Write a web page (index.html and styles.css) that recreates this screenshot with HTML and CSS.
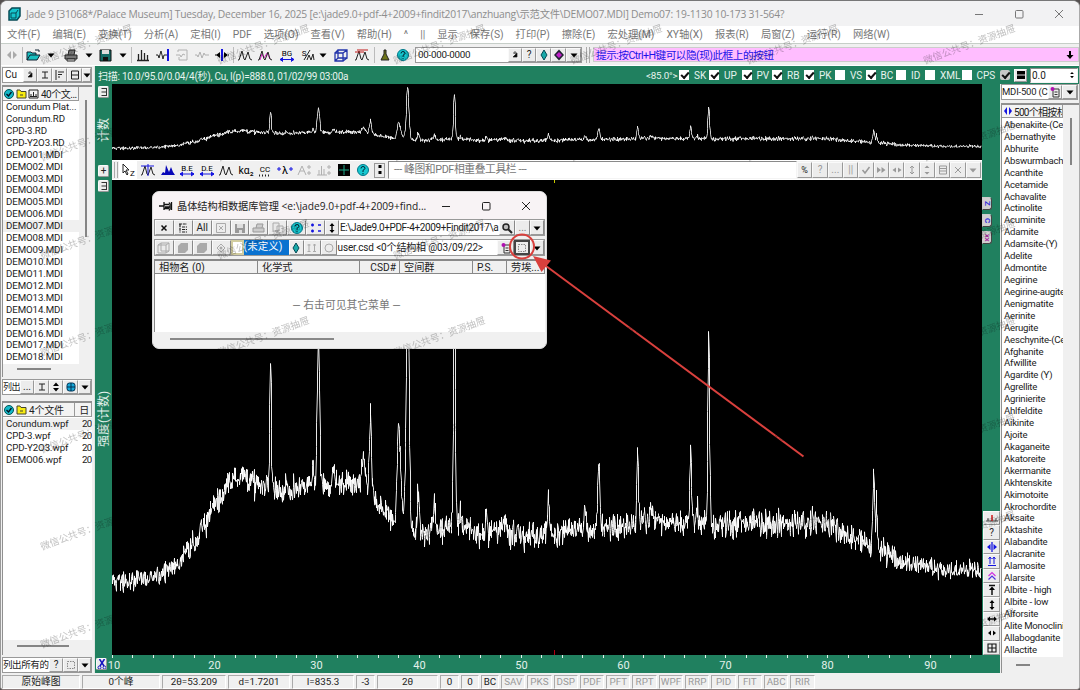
FILE: index.html
```html
<!DOCTYPE html>
<html lang="zh">

<head>
    <meta charset="utf-8">
    <title>Jade 9</title>
    <link rel="stylesheet" href="styles.css">
</head>

<body>
    <div class="app">
        <header class="titlebar">
            <i data-i="logo"></i>
            <span class="title">Jade 9 [31068*/Palace Museum] Tuesday, December 16, 2025 [e:\jade9.0+pdf-4+2009+findit2017\anzhuang\示范文件\DEMO07.MDI] Demo07: 19-1130 10-173 31-564?</span>
            <div class="winbtns"><i data-i="min"></i><i data-i="max"></i><i data-i="close"></i></div>
        </header>

        <nav class="menu" id="menu"></nav>

        <div class="toolbar">
            <i data-i="lrgray"></i><b class="sep"></b>
            <i data-i="open"></i><i data-i="down"></i>
            <i data-i="print"></i><i data-i="down"></i>
            <i data-i="save"></i><i data-i="down"></i><b class="sep"></b>
            <i data-i="bars"></i><i data-i="waveblue"></i><i data-i="boxgray"></i><i data-i="wavegray"></i><i data-i="splitblue"></i><b class="sep"></b>
            <i data-i="peaks"></i><i data-i="peakspink"></i><i data-i="bg"></i><i data-i="sm"></i><i data-i="down"></i>
            <i data-i="cube"></i><i data-i="peaksred"></i><b class="sep"></b>
            <i data-i="bell"></i><i data-i="help"></i>
            <div class="combo">
                <span class="field">00-000-0000</span>
                <button><i data-i="spin"></i></button><button>?</button><button><i data-i="drop"></i></button><button><i data-i="gem"></i></button><button><i data-i="down"></i></button>
            </div>
            <b class="grip"></b>
            <div class="hint"><span>提示:按Ctrl+H键可以隐(现)此框上的按钮</span><i data-i="arrowdown"></i></div>
        </div>

        <main>
            <aside class="left">
                <div class="strip five">
                    <span class="field">Cu</span><button><i data-i="spin"></i></button><button><i data-i="ibeam"></i></button><button><i data-i="flag"></i></button><button><i data-i="ri"></i></button><button><i data-i="down"></i></button>
                </div>
                <div class="listbox files">
                    <div class="listhead"><i data-i="check"></i><i data-i="folder"></i><i data-i="chart"></i><span>40个文...</span></div>
                    <ul id="files"></ul>
                    <b class="thumb v"></b>
                    <b class="thumb h"></b>
                </div>
                <div class="strip four">
                    <span class="field">列出</span><button>...</button><button><i data-i="ibeam"></i></button><button><i data-i="updown"></i></button><button><i data-i="globe"></i></button><button><i data-i="down"></i></button>
                </div>
                <div class="listbox wpf">
                    <div class="listhead"><i data-i="check"></i><i data-i="folder"></i><span>4个文件</span><em>日</em></div>
                    <ul id="wpf"></ul>
                    <b class="thumb h"></b>
                </div>
                <div class="strip three">
                    <span class="field">列出所有的</span><button>?</button><button><i data-i="dotbox"></i></button><button><i data-i="down"></i></button>
                </div>
            </aside>

            <section class="work">
                <div class="scanbar">
                    <span class="scan">扫描: 10.0/95.0/0.04/4(秒), Cu, I(p)=888.0, 01/02/99 03:00a</span>
                    <span class="lim">&lt;85.0°&gt;</span>
                    <div class="checks" id="checks"></div>
                    <b class="cb gray on"></b>
                    <button class="eq"><i data-i="eq"></i></button>
                    <span class="field zero">0.0<i data-i="spinner"></i></span>
                </div>

                <div class="cols">
                    <div class="chart">
                        <div class="rail">
                            <button class="tiny t1"><i data-i="ladder"></i></button>
                            <span class="axis a1">计数</span>
                            <button class="tiny t2">+</button>
                            <button class="tiny t3"><i data-i="ladder"></i></button>
                            <span class="axis a2">强度(计数)</span>
                            <button class="tiny t4"><i data-i="scissors"></i></button>
                        </div>
                        <div class="plots">
                            <svg class="over" viewBox="0 0 870 76"><path id="scan1" /></svg>
                            <div class="tools">
                                <b class="grip"></b>
                                <i class="act" data-i="cursor"></i><i data-i="peaksline"></i><i data-i="hills"></i><i data-i="be"></i><i data-i="de"></i><i data-i="peaks"></i><i data-i="ka"></i><i data-i="cc"></i><i data-i="lambda"></i><i data-i="agray"></i><i data-i="bargray"></i><i data-i="cross"></i><i data-i="help"></i>
                                <button><i data-i="dots2"></i></button>
                                <span class="field note">--- 峰图和PDF相重叠工具栏 ---</span>
                                <div class="mini">
                                    <button class="k">%</button><button>?</button><button>...</button><button>||</button><button><i data-i="tick"></i></button><button><i data-i="ff"></i></button><button><i data-i="lr"></i></button><button><i data-i="ud"></i></button><button><i data-i="ud2"></i></button><button><i data-i="sheet"></i></button><button><i data-i="xs"></i></button><button><i data-i="downgray"></i></button>
                                </div>
                            </div>
                            <svg class="mainplot" viewBox="0 0 870 475"><path id="scan2" /><path class="mark" d="M442.5 0v3" /><path class="mark red" d="M442.5 470v5" /></svg>
                            <svg class="scale" id="scale" viewBox="0 0 870 18"></svg>
                        </div>
                        <div class="rail right">
                            <div class="tabs"><button>Z</button><button>C</button><button class="p">XX</button></div>
                            <div class="zooms">
                                <button><i data-i="redbase"></i></button><button>?</button><button><i data-i="splitb"></i></button><button><i data-i="upup"></i></button><button><i data-i="chev"></i></button><button><i data-i="top"></i></button><button><i data-i="vert"></i></button><button><i data-i="horz"></i></button><button><i data-i="lrk"></i></button><button><i data-i="grid"></i></button>
                            </div>
                        </div>
                    </div>

                    <aside class="phases">
                        <div class="strip pick"><span class="field">MDI-500 (C</span><button><i data-i="note"></i></button><button><i data-i="down"></i></button></div>
                        <div class="listbox minerals">
                            <div class="listhead"><i data-i="lrblue"></i><span>500个相按材</span></div>
                            <ul id="minerals"></ul>
                            <b class="thumb v"></b>
                            <b class="thumb h"></b>
                        </div>
                    </aside>
                </div>
            </section>
        </main>

        <footer class="status" id="status"></footer>
    </div>

    <div class="dialog">
        <div class="dlgtitle">
            <i data-i="pin"></i>
            <span>晶体结构相数据库管理 &lt;e:\jade9.0+pdf-4+2009+find...</span>
            <div class="winbtns"><i data-i="min"></i><i data-i="max"></i><i data-i="close"></i></div>
        </div>
        <div class="dlgrow one">
            <button><i data-i="x"></i></button><button><i data-i="list"></i></button><button>All</button><button><i data-i="boxx"></i></button><button><i data-i="savegray"></i></button><button><i data-i="printgray"></i></button><button><i data-i="copy"></i></button><button><i data-i="help"></i></button><button><i data-i="dots"></i></button><button><i data-i="vert"></i></button>
            <span class="field path">E:\Jade9.0+PDF-4+2009+Findit2017\a</span>
            <button><i data-i="search"></i></button><button class="dim">...</button><button><i data-i="down"></i></button>
        </div>
        <div class="dlgrow two">
            <button><i data-i="cubegray"></i></button><button><i data-i="blob"></i></button><button><i data-i="blob"></i></button><button><i data-i="gemgray"></i></button>
            <b class="swatch"></b><span class="sel">(未定义)</span>
            <button><i data-i="drop"></i></button><button><i data-i="upgray"></i></button><button><i data-i="ring"></i></button>
            <span class="field">user.csd &lt;0个结构相 @03/09/22&gt;</span>
            <button><i data-i="note"></i></button><button class="boxed"><i data-i="dotbox"></i></button><button><i data-i="down"></i></button>
        </div>
        <div class="dlghead"><span>相物名 (0)</span><span>化学式</span><span class="num">CSD#</span><span>空间群</span><span>P.S.</span><span>劳埃...</span></div>
        <div class="dlgbody">— 右击可见其它菜单 —</div>
        <div class="dlgscroll"><b></b></div>
    </div>

    <svg class="callout" viewBox="0 0 1080 690">
        <circle cx="522" cy="246.500" r="12" />
        <path d="M803.500 456.500L544 264.500" />
        <polygon points="533,256 551,260.500 541.500,272" />
    </svg>

    <div class="stamps" id="stamps"></div>

    <script src="app.js"></script>
</body>

</html>
```
FILE: styles.css
```css
* {
    box-sizing: border-box;
}

body {
    margin: 0;
    width: 1080px;
    height: 690px;
    overflow: hidden;
    background: #55504f;
    font-family: Roboto, "Noto Sans CJK SC", sans-serif;
    font-size: 10px;
    color: #222;
}

button {
    margin: 0;
    padding: 0;
    border: 1px solid;
    border-color: #fafafa #999 #999 #fafafa;
    background: #ececec;
    font: inherit;
    color: #222;
    display: flex;
    align-items: center;
    justify-content: center;
    overflow: hidden;
    min-width: 0;
    line-height: 1;
}

ul {
    list-style: none;
    margin: 0;
    padding: 0;
}

i {
    display: flex;
    align-items: center;
    justify-content: center;
}

i svg {
    width: 16px;
    height: 14px;
    flex: none;
}

svg .g {
    font-weight: normal;
    font-style: normal;
    font-size: 8px;
}

svg .k {
    font-size: 11px;
}

.app {
    width: 1080px;
    height: 690px;
    display: flex;
    flex-direction: column;
    background: #f0f0f0;
    border-top: 1px solid #777;
    border-left: 1px solid #999;
    border-right: 1px solid #aaa;
    border-bottom: 1px solid #8a7c7c;
    border-radius: 7px 7px 4px 4px;
    overflow: hidden;
}

.field {
    background: #fff;
    border: 1px solid;
    border-color: #8a8a8a #f4f4f4 #f4f4f4 #8a8a8a;
    overflow: hidden;
    white-space: nowrap;
}

/* title and menu */
.titlebar {
    height: 25px;
    flex: none;
    background: #f2f2f3;
    display: flex;
    align-items: center;
    padding-left: 5px;
    color: #8d8d8d;
}

.title {
    font-family: "Open Sans", "Noto Sans CJK SC", sans-serif;
    font-size: 10.300px;
    letter-spacing: -0.235px;
    margin-left: 4px;
    flex: 1;
    white-space: nowrap;
}

.winbtns {
    display: grid;
    grid-template-columns: repeat(3, 40px);
    color: #777;
}

.menu {
    height: 18px;
    flex: none;
    background: #fff;
    display: flex;
    gap: 12px;
    padding-left: 6px;
    align-items: center;
    font-size: 10.300px;
    color: #777;
    white-space: nowrap;
    border-bottom: 1px solid #c6cec8;
}

.menu span {
    line-height: 16px;
}

/* main toolbar */
.toolbar {
    height: 22px;
    flex: none;
    display: grid;
    grid-template-columns: 21px 1px 20px 15px 25px 11px 22px 13px 4px 20px 20px 19px 20px 20px 3px 20px 19px 25px 17px 14px 21px 21px 4px 17px 20px 170px 10px 1fr;
    align-items: center;
    border-bottom: 1px solid #fff;
}

.sep {
    width: 1px;
    height: 16px;
    background: #bbb;
    justify-self: center;
}

.grip {
    width: 4px;
    height: 16px;
    border-left: 1px solid #aaa;
    border-right: 1px solid #aaa;
    justify-self: center;
}

.combo {
    display: grid;
    grid-template-columns: 1fr 14px 14px 15px 15px 15px;
    height: 16px;
    margin: 0 1px 0 2px;
    border: 1px solid #999;
}

.combo .field {
    border: 0;
    padding-left: 2px;
    line-height: 14px;
    font-size: 9.800px;
    letter-spacing: -0.25px;
}

.hint {
    height: 15px;
    background: #ffbdff;
    color: #1b12e8;
    display: flex;
    align-items: center;
    justify-content: space-between;
    padding-left: 2px;
    font-size: 10.700px;
    letter-spacing: -0.55px;
    border: 1px solid #ccc;
}

/* layout */
main {
    display: flex;
    height: 607px;
    flex: none;
}

.left {
    width: 94px;
    flex: none;
    display: flex;
    flex-direction: column;
    padding: 1px 2px 0 1px;
    border-right: 1px solid #dfe5e2;
}

.strip {
    display: grid;
    height: 16px;
    flex: none;
    border: 1px solid #999;
}

.strip .field {
    border: 0;
    padding-left: 2px;
    line-height: 14px;
}

.strip.five {
    grid-template-columns: 20px 14px 15px 15px 15px 1fr;
}

.strip.four {
    grid-template-columns: 17px 14px 15px 14px 15px 1fr;
}

.strip.four .field {
    padding-left: 0;
    font-size: 9px;
    letter-spacing: -0.5px;
}

.strip.three {
    grid-template-columns: 46px 14px 15px 1fr;
    margin-top: 2px;
}

.strip.three .field {
    padding-left: 0;
    font-size: 9.500px;
    letter-spacing: -0.4px;
}

.listbox {
    position: relative;
    background: #f0f0f0;
    border-top: 2px solid #909090;
    border-left: 1px solid #909090;
    overflow: hidden;
    flex: none;
}

.listbox ul {
    background: #fff;
    line-height: 11.930px;
    font-size: 9.700px;
    letter-spacing: -0.1px;
    overflow: hidden;
    white-space: nowrap;
}

.listbox li {
    padding-left: 3px;
    height: 11.930px;
}

.listbox li.sel {
    background: #f0f0f0;
}

.listhead {
    display: flex;
    align-items: center;
    height: 13px;
    border: 1px solid #999;
    border-width: 0 1px 1px 0;
    background: #f3f3f3;
    font-size: 10px;
    letter-spacing: -0.2px;
    white-space: nowrap;
    overflow: hidden;
}

.listhead i {
    width: 12px;
    flex: none;
}

.listhead span {
    margin-left: 2px;
}

.files {
    height: 292px;
    margin: 2px 0;
}

.files .listhead {
    width: 76px;
    height: 14px;
}

.files .listhead span {
    letter-spacing: -0.5px;
}

.files ul {
    width: 76px;
    height: 263px;
}

.wpf {
    height: 254px;
    margin-top: 6px;
}

.wpf .listhead {
    height: 14px;
}

.wpf .listhead em {
    margin-left: auto;
    border-left: 1px solid #999;
    padding: 0 2px 0 4px;
    font-style: normal;
}

.wpf ul {
    height: 223px;
    padding-top: 1px;
}

.wpf li {
    display: flex;
    justify-content: space-between;
}

.wpf li span + span {
    width: 10px;
    letter-spacing: -0.6px;
    overflow: hidden;
}

.thumb {
    position: absolute;
    background: #858585;
}

.thumb.v {
    width: 2px;
    left: 82px;
    top: 13px;
    height: 137px;
}

.thumb.h {
    height: 2px;
    left: 14px;
    width: 34px;
    bottom: 7px;
}

.wpf .thumb.h {
    width: 52px;
    bottom: 8px;
}

/* work area */
.work {
    flex: 1;
    min-width: 0;
    background: #20805f;
}

.scanbar {
    height: 18px;
    display: grid;
    grid-template-columns: 548px 33px 321px 13px 17px 1fr;
    align-items: center;
    color: #e7f3ee;
    padding-left: 3px;
}

.scan {
    font-size: 10px;
    letter-spacing: -0.25px;
    white-space: nowrap;
}

.lim {
    font-size: 9.800px;
    letter-spacing: -0.2px;
}

.checks {
    display: grid;
    grid-template-columns: 30px 32.500px 30.500px 32px 31px 30.500px 30.500px 29px 36.500px 1fr;
    font-size: 10px;
}

.checks span {
    display: flex;
    align-items: center;
    gap: 5px;
}

.cb {
    width: 10px;
    height: 10px;
    background: #fff;
    flex: none;
    position: relative;
}

.cb.on::after {
    content: "";
    position: absolute;
    left: 2px;
    top: 2px;
    width: 6px;
    height: 3px;
    border: solid #111;
    border-width: 0 0 2px 2px;
    transform: rotate(-48deg);
}

.cb.gray {
    background: #c6c6c6;
    border-radius: 2px;
}

.eq {
    width: 13px;
    height: 13px;
    margin-left: 1px;
}

.zero {
    color: #222;
    height: 15px;
    line-height: 13px;
    display: flex;
    justify-content: space-between;
    padding-left: 1px;
    font-size: 10px;
    margin-right: 1px;
}

.zero i svg {
    width: 10px;
}

.cols {
    display: flex;
    height: 589px;
}

.chart {
    width: 905px;
    display: grid;
    grid-template-columns: 17px 870px 18px;
}

.rail {
    display: flex;
    flex-direction: column;
    align-items: center;
}

.tiny {
    width: 11px;
    height: 12px;
    border-radius: 2px;
    flex: none;
}

.t1 { margin-top: 2px; }
.t2 { margin-top: 23px; }
.t3 { margin-top: 3px; }
.t4 { margin: auto 4px 3px 0; }

.axis {
    writing-mode: vertical-rl;
    text-orientation: sideways;
    transform: rotate(180deg);
    color: #e3f1eb;
    font-size: 12px;
    line-height: 14px;
    text-align: center;
    white-space: nowrap;
}

.a1 {
    margin-top: 20px;
    height: 24px;
}

.a2 {
    margin-top: 197px;
    height: 60px;
}

.plots {
    display: flex;
    flex-direction: column;
    background: #000;
}

.plots > svg {
    display: block;
    width: 870px;
    flex: none;
}

.over {
    height: 76px;
}

.mainplot {
    height: 475px;
}

.scale {
    height: 18px;
    background: #20805f;
    overflow: visible;
}

.scale text {
    fill: #e3f1eb;
    font-size: 11px;
    text-anchor: middle;
}

.scale path {
    stroke: #e3f1eb;
}

#scan1,
#scan2 {
    fill: none;
    stroke: #fff;
    stroke-width: 0.900;
    stroke-linejoin: bevel;
}

#scan1 {
    stroke-width: 0.800;
}

.mark {
    stroke: #c8c800;
}

.mark.red {
    stroke: #b00010;
}

.tools {
    height: 20px;
    background: #f0f0f0;
    display: grid;
    grid-template-columns: 7px 18px 21px 19px 20px 19px 20px 19px 20px 19px 20px 20px 19px 20px 14px 410px 184px;
    align-items: center;
    border: 1px solid #fff;
    border-width: 1px 0;
}

.act {
    background: #fff;
    height: 18px;
}

.tools > button {
    height: 15px;
    width: 11px;
    border-color: #999;
    margin-left: 1px;
}

.note {
    height: 18px;
    line-height: 16px;
    font-size: 10.800px;
    letter-spacing: -0.4px;
    color: #777;
    padding-left: 5px;
    margin-left: 1px;
}

.mini {
    display: grid;
    grid-template-columns: repeat(12, 1fr);
    height: 16px;
}

.mini button {
    color: #999;
}

.mini .k {
    color: #222;
    font-size: 9px;
}

.rail.right {
    align-items: flex-start;
    justify-content: space-between;
    padding-top: 113px;
    padding-bottom: 18px;
}

.tabs button {
    width: 10px;
    height: 13px;
    margin-bottom: 4px;
    font-size: 8px;
    font-weight: bold;
    color: #3432d8;
    background: #d0d0d0;
    border-color: #ccc #444 #444 #ccc;
    writing-mode: vertical-rl;
    border-radius: 0 3px 3px 0;
}

.tabs .p {
    font-size: 6px;
    color: #a3209c;
}

.zooms {
    display: grid;
    grid-template-rows: repeat(10, 14.400px);
    width: 17px;
    margin-left: 1px;
}

/* right list */
.phases {
    flex: 1;
    background: #f0f0f0;
    min-width: 0;
    padding-left: 1px;
}

.strip.pick {
    grid-template-columns: 46px 14px 1fr;
    font-size: 9.500px;
    margin-right: 1px;
}

.pick .field {
    padding-left: 0;
    letter-spacing: -0.2px;
}

.minerals {
    height: 570px;
    margin-top: 3px;
}

.minerals .listhead {
    width: 61px;
}

.minerals .listhead span {
    margin-left: 0;
    letter-spacing: -0.7px;
}

.minerals ul {
    width: 61px;
    height: 539px;
    padding-top: 1px;
    font-size: 9.600px;
    letter-spacing: -0.22px;
}

.minerals li {
    padding-left: 2px;
}

.minerals .thumb.v {
    left: 68px;
    height: 47px;
}

.minerals .thumb.h {
    width: 14px;
    bottom: 7px;
}

/* status */
.status {
    flex: 1;
    min-height: 0;
    display: grid;
    grid-template-columns: 80px 80px 66px 64px 64px 21px 63px 21px 20px 20px repeat(12, 26.300px) 1fr;
    padding: 2px 0 1px 1px;
    background: #f0f0f0;
}

.status span {
    border: 1px solid;
    border-color: #aaa #fff #fff #aaa;
    margin-right: 2px;
    text-align: center;
    line-height: 12px;
    white-space: nowrap;
    font-size: 9.800px;
}

.status .off {
    color: #999;
}

/* dialog */
.dialog {
    position: absolute;
    left: 152px;
    top: 191px;
    width: 395px;
    height: 158px;
    background: #f0f0f0;
    border-radius: 7px;
    border: 1px solid #ddd;
    overflow: hidden;
    padding: 0 1px;
}

.dlgtitle {
    height: 27px;
    margin: 0 -1px;
    background: #f8f3f5;
    display: flex;
    align-items: center;
    padding-left: 5px;
    color: #222;
    font-family: "Open Sans", "Noto Sans CJK SC", sans-serif;
    font-size: 10.200px;
    white-space: nowrap;
}

.dlgtitle span {
    flex: 1;
    margin-left: 3px;
}

.dlgtitle .winbtns {
    color: #222;
    margin-right: 2px;
}

.dlgrow {
    display: grid;
    height: 17px;
    border: 1px solid #999;
    margin-bottom: 3px;
}

.dlgrow .field {
    border: 0;
    line-height: 15px;
    padding-left: 1px;
    font-size: 10px;
    letter-spacing: -0.15px;
}

.dlgrow .path {
    letter-spacing: -0.38px;
}

.dlgrow button {
    border-right-color: #888;
}

.one {
    grid-template-columns: repeat(9, 18.900px) 14px 160px 16px 15px 1fr;
}

.two {
    grid-template-columns: repeat(4, 18.900px) 13px 45px 15px 17px 16px 1fr 17px 16px 14px;
}

.swatch {
    background: #fff;
    border: 2px solid #d2cda0;
}

.sel {
    white-space: nowrap;
}

.two .sel {
    background: #0a72d0;
    color: #fff;
    line-height: 14px;
    font-size: 10.500px;
}

.two .boxed {
    border: 2px solid #444;
}

.dim {
    color: #777;
}

.dlghead {
    display: grid;
    grid-template-columns: 103px 102px 40px 73px 34px 1fr;
    height: 15px;
    border-top: 2px solid #888;
    border-left: 1px solid #888;
    font-size: 10.200px;
    line-height: 13px;
}

.dlghead span {
    border-right: 1px solid #888;
    border-bottom: 1px solid #888;
    padding-left: 4px;
    white-space: nowrap;
    overflow: hidden;
}

.dlghead .num {
    text-align: right;
    padding: 0 3px 0 0;
}

.dlgbody {
    height: 58px;
    background: #fff;
    border-left: 1px solid #888;
    display: flex;
    align-items: center;
    justify-content: center;
    padding: 2px 7px 0 0;
    color: #777;
    font-size: 10.800px;
}

.dlgscroll {
    padding: 6px 0 0 16px;
}

.dlgscroll b {
    display: block;
    width: 164px;
    height: 2px;
    background: #888;
}

/* overlays */
.callout {
    position: absolute;
    left: 0;
    top: 0;
    width: 1080px;
    height: 690px;
    fill: none;
    stroke: #d9403d;
    stroke-width: 2;
}

.callout polygon {
    fill: #d9403d;
    stroke: none;
}

.stamps {
    position: absolute;
    left: 43px;
    top: 55px;
    display: grid;
    grid-template-columns: repeat(5, 176.500px) 100px;
    grid-template-rows: repeat(6, 97.300px) 12px;
    mix-blend-mode: multiply;
    color: #c2c2c2;
    font-size: 9.700px;
    white-space: nowrap;
    pointer-events: none;
}

.stamps span {
    line-height: 12px;
    height: 12px;
    transform: rotate(-20deg);
    transform-origin: 0 100%;
}
```
FILE: app.js
```js
const peaksPath = 'M1 12h1l3-9 2 8 1 1 3-8 2 7 2 1';

const icons = {
    logo: '<path d="M3 4l3-3h8v8l-3 4H3z" fill="#16c4cc" stroke="#064a55" stroke-width="1.5"/><path d="M5 6h5v5H5zM10 6l2-3" fill="none" stroke="#064a55"/>',
    min: '<path d="M4 7.500h8" stroke="currentColor"/>',
    max: '<rect x="4.500" y="3.500" width="7.500" height="7.500" rx="1" fill="none" stroke="currentColor"/>',
    close: '<path d="M4 3l8 8M12 3l-8 8" stroke="currentColor"/>',
    down: '<path d="M4.500 5.500h7L8 9.500z"/>',
    downgray: '<path d="M4.500 5.500h7L8 9.500z" fill="#999"/>',
    lrgray: '<path d="M7 3v8L3 7zM9 3v8l4-4z" fill="#aaa"/>',
    lrblue: '<path d="M7 3v8L4 7zM9 3v8l3-4z" fill="#1414e0"/>',
    open: '<path d="M2 12V4h4l1 1h4v2M2 12l3-5h10l-3 5z" fill="#18c0c0" stroke="#123" /><path d="M10 2h4v2" fill="none" stroke="#123"/>',
    print: '<path d="M2 7h12v4H2zM5 7l1-5h6l-1 5" fill="#777" stroke="#222"/><path d="M4 11h8v2H4z" fill="#eee" stroke="#222"/>',
    save: '<path d="M3 2h11v11H3z" fill="#116b66" stroke="#111"/><path d="M5 2h7v4H5z" fill="#ddd"/><path d="M6 9h5v4H6z" fill="#111"/>',
    bars: '<path d="M2 12.500h12M3.500 12V6M6.500 12V2M9.500 12V5M12.500 12V7" stroke="#222" stroke-width="1.300"/>',
    waveblue: '<path d="M1 7h2l1 3 2-7 2 8 1-4h4" fill="none" stroke="#222"/><path d="M13 1v12" stroke="#1414e0" stroke-width="2"/>',
    boxgray: '<path d="M3 4V2h9v10H4V9M1 7h4l1 2 2-3 2 1" fill="none" stroke="#b0b0b0"/>',
    wavegray: '<path d="M1 7h2l1 2 2-5 2 6 2-5 1 2h4" fill="none" stroke="#b0b0b0"/>',
    splitblue: '<path d="M8 1v12" stroke="#1414e0" stroke-width="2"/><path d="M6 4v6L2 7zM10 4v6l4-3zM1 6.500h2v1H1zM13 6.500h2v1h-2z"/>',
    splitb: '<path d="M8 2v10" stroke="#1414e0" stroke-width="1.300"/><path d="M6.500 4v6L3 7zM9.500 4v6L13 7z" fill="#1414e0"/>',
    peaks: '<path d="' + peaksPath + '" fill="none" stroke="#222"/>',
    peakspink: '<path d="M3 12l2-6 2 4 3-5 3 6" fill="none" stroke="#e030d0"/><path d="' + peaksPath + '" fill="none" stroke="#222"/>',
    peaksred: '<path d="' + peaksPath + '" fill="none" stroke="#222"/><path d="M3 2h11M1 4h9" stroke="#c01818"/>',
    peaksline: '<path d="' + peaksPath + '" fill="none" stroke="#222"/><path d="M1 3h13M8 1v12" stroke="#1414e0"/>',
    hills: '<path d="M1 12l2-3 2 1 1-8 3 7 2-5 2 5 2 3z" fill="#0808b8"/>',
    bg: '<text x="8" y="7.500" class="g">BG</text><path d="M1 11.500h14M4 9.500l-3 2 3 2M12 9.500l3 2-3 2" stroke="#1414e0" fill="#1414e0"/>',
    be: '<text x="8" y="7.500" class="g">B.E</text><path d="M1 11h14M4 9l-3 2 3 2M12 9l3 2-3 2" stroke="#1414e0" fill="#1414e0"/>',
    de: '<text x="8" y="7.500" class="g">D.E</text><path d="M1 11h14M4 9l-3 2 3 2M12 9l3 2-3 2" stroke="#1414e0" fill="#1414e0"/>',
    sm: '<text x="4" y="8" class="g">S</text><path d="M4 12L10 2M7 12l2-5 2 5 2-6 1 6" fill="none" stroke="#222"/>',
    ka: '<text x="8" y="11" class="g k" textLength="15" lengthAdjust="spacingAndGlyphs">kα₂</text>',
    cc: '<text x="8" y="9" class="g">CC</text><path d="M2 12.500h12" stroke="#222" stroke-width="2" stroke-dasharray="1 2"/>',
    lambda: '<text x="8" y="11" class="g k">λ</text><path d="M0 6h4M2 4v4M12 6h4M14 4v4" stroke="#1414e0"/>',
    agray: '<path d="M2 12l4-9 4 9M4 8h4M13 2v4M13 8v4M11 4h4M11 10h4" fill="none" stroke="#b0b0b0"/>',
    bargray: '<path d="M1 12h10M3 12V7M5.500 12V3M8 12V6M13 2v4M13 8v4M11 4h4M11 10h4" fill="none" stroke="#b0b0b0"/>',
    cross: '<path d="M2 1h12v12H2z"/><path d="M8 2v10M3 7h10" stroke="#1ba888"/>',
    cube: '<path d="M2 5h8v8H2zM5 2h9v8H5zM2 5l3-3M10 5l4-3M10 13l4-3M2 13l3-3" fill="none" stroke="#2233aa" stroke-width="1.300"/>',
    cubegray: '<path d="M2 4h8v8H2zM5 2h8v8H5zM2 4l3-2M10 4l3-2M10 12l3-2" fill="none" stroke="#aaa"/>',
    bell: '<path d="M7 2h2v4l3 6H4l3-6z" fill="#6d7418" stroke="#222"/>',
    help: '<circle cx="8" cy="7" r="5.500" fill="#15c8d0" stroke="#078"/><path d="M6 5.500q0-2 2-2t2 1.800q0 1-2 2V9M8 10v1.300" fill="none" stroke="#023"/>',
    spin: '<path d="M6 5h4M8 3v3M6 9l4-4v4z" stroke="#222" stroke-width=".7"/>',
    drop: '<path d="M8 2l3 5-3 5-3-5z" fill="#18a8a8" stroke="#064a55"/>',
    gem: '<path d="M8 1.500L13 7l-5 5.500L3 7z" fill="#223"/><path d="M8 4l3 3-3 3-3-3z" fill="#c020c8"/>',
    gemgray: '<path d="M8 3l4 4-4 4-4-4z" fill="none" stroke="#aaa"/><circle cx="8" cy="7" r="1.500" fill="#aaa"/>',
    arrowdown: '<path d="M7 3h2v4h2.500L8 11 4.500 7H7z"/>',
    ibeam: '<path d="M5 4h6M8 4v6M5 10h6" stroke="#222"/>',
    flag: '<path d="M4 2v10M6 4h6M6 6.500h4M6 9h2" stroke="#222"/>',
    ri: '<path d="M4.500 3h7v8h-7zM5 7h6" fill="none" stroke="#222"/>',
    check: '<circle cx="8" cy="7" r="4.500" fill="#15b8c8" stroke="#055"/><path d="M5.500 7l2 2 3-4" fill="none" stroke="#012" stroke-width="1.300"/>',
    folder: '<path d="M4 3h3l1 1.500h5V11H4z" fill="#f8ec10" stroke="#443"/><path d="M7 8h3" stroke="#443"/>',
    chart: '<path d="M4 3h9v8H4z" fill="none" stroke="#222"/><path d="M6 9V7M8.500 9V5M11 9V7M5 9.500h7" stroke="#222"/>',
    updown: '<path d="M8 2.500L11 6H5zM8 11.500L11 8H5z"/>',
    ud: '<path d="M8 3v8M6 5l2-2 2 2M6 9l2 2 2-2" fill="none" stroke="#999"/>',
    ud2: '<path d="M8 2.500L10.500 5h-5zM8 11.500L10.500 9h-5z" fill="#999"/>',
    globe: '<rect x="4" y="3" width="8" height="8" rx="2.500" fill="#18a8d8" stroke="#035"/><path d="M8 3v8M4 7h8" stroke="#035"/>',
    dotbox: '<rect x="4.500" y="3.500" width="7" height="7" fill="none" stroke="#888" stroke-dasharray="1.500 1"/>',
    eq: '<path d="M4 3h8v8H4z"/><path d="M4 7h8" stroke="#ddd"/>',
    spinner: '<path d="M8 2L11 5.500H5zM8 12L11 8.500H5z"/>',
    ladder: '<path d="M5.500 3.500h5M5.500 7h5M5.500 10.500h5M10.500 3v8" stroke="#333"/>',
    scissors: '<path d="M5.500 2L10 9M10.500 2L6 9" stroke="#1414c0" stroke-width="1.500"/><circle cx="5.500" cy="10.500" r="1.500" fill="none" stroke="#1414c0"/><circle cx="10.500" cy="10.500" r="1.500" fill="none" stroke="#1414c0"/>',
    cursor: '<path d="M3 1l6 6H6l2 4-1 1-2-4-2 2z" fill="#fff" stroke="#222"/><text x="12.500" y="13" class="g">Z</text>',
    dots2: '<path d="M6.500 2h3v3h-3zM6.500 8h3v3h-3z"/>',
    tick: '<path d="M4.500 7l2.500 3 4.500-6" fill="none" stroke="#999" stroke-width="1.500"/>',
    ff: '<path d="M4 4v6l4-3zM8.500 4v6l4-3z" fill="#999"/>',
    lr: '<path d="M7 4.500v5L3.500 7zM9 4.500v5L12.500 7z" fill="#999"/>',
    lrk: '<path d="M7 4.500v5L4 7zM9 4.500v5L12 7z"/>',
    sheet: '<path d="M4.500 3h7v8h-7zM5 5.500h6M5 8h6" fill="none" stroke="#999"/>',
    xs: '<path d="M5 4l6 6M11 4l-6 6" stroke="#999"/>',
    x: '<path d="M5.500 4.500l5 5M10.500 4.500l-5 5" stroke="#111" stroke-width="1.500"/>',
    redbase: '<path d="M2 10h12M4 10V7M12 10V7" stroke="#444"/><path d="M8 10V4" stroke="#d01818" stroke-width="1.500"/>',
    upup: '<path d="M4 11.500h8M6 10V3M10 10V3M4.500 5L6 3l1.500 2M8.500 5L10 3l1.500 2" stroke="#1414e0" fill="none"/>',
    chev: '<path d="M4.500 7L8 3.500 11.500 7" stroke="#d030e0" fill="none" stroke-width="1.200"/><path d="M4.500 10.500L8 7l3.500 3.500" stroke="#5030e0" fill="none" stroke-width="1.200"/>',
    top: '<path d="M5 2.500h6M8 5v7" stroke="#111" stroke-width="1.500"/><path d="M8 3.500l3 3.500H5z"/>',
    vert: '<path d="M8 4v6" stroke="#111" stroke-width="1.500"/><path d="M8 2l2.500 3h-5zM8 12l2.500-3h-5z"/>',
    horz: '<path d="M5 7h6" stroke="#111" stroke-width="1.500"/><path d="M3 7l3-2.500v5zM13 7l-3-2.500v5z"/>',
    grid: '<path d="M4 3h8v8H4zM8 3v8M4 7h8" fill="none" stroke="#111" stroke-width="1.100"/>',
    note: '<path d="M6 4h6v8H6zM7.500 7h3M7.500 9.500h3" fill="none" stroke="#333"/><circle cx="5.500" cy="4" r="2" fill="#b010b0"/>',
    pin: '<path d="M1 7h5M6 3v8M6 5.500h5M6 9.500h5M7 8h5M11 3.500l1 1.500v5l-1 1.500M13.500 3v8" stroke="#111" fill="none" stroke-width="1.300"/>',
    list: '<path d="M4 3h8M7 6h5M7 8.500h5M7 11h5M5 3v8.500" stroke="#222" stroke-width="1.200" stroke-dasharray="3 .8"/>',
    boxx: '<path d="M3.500 2.500h9v9h-9zM6 5l4 4M10 5L6 9" fill="none" stroke="#aaa"/>',
    savegray: '<path d="M3 3h10v9H3z" fill="#999"/><path d="M5 3h6v4H5zM7 9h3v3H7z" fill="#ddd"/>',
    printgray: '<path d="M2 7h11v4H2zM5 7l1-4h6l-1 4" fill="#ccc" stroke="#999"/>',
    copy: '<path d="M3 2h6v8H3zM7 5h6v7H7z" fill="#e8e8e8" stroke="#aaa"/>',
    dots: '<path d="M3 4h3M4.500 2.500v3M10 4h3M3 10h3M4.500 8.500v3M10 10h3" stroke="#1414e0" stroke-width="1.500"/>',
    search: '<circle cx="7" cy="6" r="3" fill="#bbb" stroke="#222" stroke-width="1.500"/><path d="M9 8l4 4" stroke="#222" stroke-width="2"/>',
    blob: '<path d="M3 5l3-3h7v7l-3 3H3z" fill="#aaa"/>',
    upgray: '<path d="M5 3v8M10.500 3v8M3.500 4h3M9 4h3M3.500 10.500h3M9 10.500h3" stroke="#aaa"/>',
    ring: '<circle cx="8" cy="7" r="4" fill="none" stroke="#aaa"/>'
};

document.querySelectorAll('[data-i]').forEach(el => {
    el.innerHTML = `<svg viewBox="0 0 16 14" text-anchor="middle">${icons[el.dataset.i]}</svg>`;
});

function fill(id, html) {
    document.getElementById(id).innerHTML = html;
}

const menu = ['文件(F)', '编辑(E)', '变换(T)', '分析(A)', '定相(I)', 'PDF', '选项(O)', '查看(V)', '帮助(H)', '^', '||', '显示', '保存(S)', '打印(P)', '擦除(E)', '宏处理(M)', 'XY轴(X)', '报表(R)', '局窗(Z)', '运行(R)', '网络(W)'];
fill('menu', menu.map(m => `<span>${m}</span>`).join(''));

const checks = [['SK', 1], ['UP', 1], ['PV', 1], ['RB', 1], ['PK', 1], ['VS', 0], ['BC', 1], ['ID', 0], ['XML', 0], ['CPS', 0]];
fill('checks', checks.map(c => `<span><b class="cb ${c[1] ? 'on' : ''}"></b>${c[0]}</span>`).join(''));

const files = ['Corundum Plat...', 'Corundum.RD', 'CPD-3.RD', 'CPD-Y2O3.RD'];
for (let i = 1; i <= 18; i++) {
    files.push('DEMO' + String(i).padStart(2, '0') + '.MDI');
}
fill('files', files.map(f => `<li class="${f === 'DEMO07.MDI' ? 'sel' : ''}">${f}</li>`).join(''));

const wpf = ['Corundum.wpf', 'CPD-3.wpf', 'CPD-Y2O3.wpf', 'DEMO06.wpf'];
fill('wpf', wpf.map((f, i) => `<li class="${i ? '' : 'sel'}"><span>${f}</span><span>20</span></li>`).join(''));

const minerals = ['Abenakiite-(Ce', 'Abernathyite', 'Abhurite', 'Abswurmbach', 'Acanthite', 'Acetamide', 'Achavalite', 'Actinolite', 'Acuminite', 'Adamite', 'Adamsite-(Y)', 'Adelite', 'Admontite', 'Aegirine', 'Aegirine-augite', 'Aenigmatite', 'Aerinite', 'Aerugite', 'Aeschynite-(Ce', 'Afghanite', 'Afwillite', 'Agardite (Y)', 'Agrellite', 'Agrinierite', 'Ahlfeldite', 'Aikinite', 'Ajoite', 'Akaganeite', 'Akatoreite', 'Akermanite', 'Akhtenskite', 'Akimotoite', 'Akrochordite', 'Aksaite', 'Aktashite', 'Alabandite', 'Alacranite', 'Alamosite', 'Alarsite', 'Albite - high', 'Albite - low', 'Alforsite', 'Alite Monoclini', 'Allabogdanite', 'Allactite'];
fill('minerals', minerals.map(m => `<li>${m}</li>`).join(''));

const status = ['原始峰图', '0个峰', '2θ=53.209', 'd=1.7201', 'I=835.3', '-3', '2θ', '0', '0', 'BC'];
const modes = ['SAV', 'PKS', 'DSP', 'PDF', 'PFT', 'RPT', 'WPF', 'RRP', 'PID', 'FIT', 'ABC', 'RIR'];
fill('status', status.map(s => `<span>${s}</span>`).join('') + modes.map(s => `<span class="off">${s}</span>`).join(''));

fill('stamps', '<span>微信公共号：资源抽屉</span>'.repeat(42));

// axis labels, 10.2px per degree
let ticks = '';
let labels = '';
for (let t = 10; t < 95; t += 2) {
    const x = Math.round((t - 10) * 10.22) + 0.5;
    ticks += `M${x} 0v3`;
    if (t % 10 === 0) {
        labels += `<text x="${t === 10 ? 2 : x}" y="14">${t}</text>`;
    }
}
fill('scale', `<path d="${ticks}"/>${labels}`);

// diffraction pattern: background points and peaks [x, top, width]
const base = [[112, 580], [130, 582], [140, 580], [150, 578], [160, 575], [170, 570], [180, 561], [190, 549], [200, 534], [207, 521], [213, 507], [220, 495], [228, 483], [235, 479], [243, 475], [250, 479], [258, 487], [265, 485], [280, 490], [290, 491], [300, 488], [312, 484], [330, 485], [345, 485], [365, 485], [372, 490], [376, 502], [385, 510], [392, 518], [403, 518], [415, 532], [425, 535], [440, 532], [452, 526], [462, 526], [470, 529], [480, 535], [500, 532], [520, 535], [537, 536], [560, 530], [575, 530], [590, 527], [605, 527], [630, 526], [650, 523], [690, 522], [710, 526], [730, 525], [750, 522], [770, 525], [800, 523], [820, 522], [830, 525], [840, 532], [850, 538], [860, 538], [870, 545], [880, 550], [890, 556], [900, 562], [920, 566], [940, 568], [950, 572], [965, 570], [983, 571]];
const peaks = [[270.5, 361, 0.8], [313, 468, 0.9], [318.5, 328, 1.2], [334, 460, 1.1], [348, 472, 0.8], [363, 452, 1.3], [370.5, 402, 0.9], [399, 425, 1.6], [407.7, 212, 1.3], [418.5, 496, 1.2], [431.5, 514, 1], [434.7, 502, 1], [454.5, 252, 0.9], [460, 513, 0.8], [486, 514, 1.2], [504.3, 514, 1.2], [548.5, 505, 1], [585, 514, 1], [598.8, 461, 1.1], [637.6, 443, 0.8], [644, 511, 1], [651.5, 508, 1.6], [690.7, 457, 0.9], [697, 512, 0.8], [708.8, 336, 0.9], [873.8, 465, 0.8], [876.5, 500, 0.7]];

let seed = 31068;
function rnd() {
    seed = (seed * 16807) % 2147483647;
    return seed / 2147483647;
}

function background(x) {
    let i = 1;
    while (i < base.length - 1 && base[i][0] < x) {
        i++;
    }
    const [x0, y0] = base[i - 1];
    const [x1, y1] = base[i];
    return y0 + (y1 - y0) * (x - x0) / (x1 - x0);
}

let d1 = 'M';
let d2 = 'M';
for (let n = 0; n <= 2125; n++) {
    const x = 112 + n * 0.409;
    const b = background(x);
    let y = b;
    for (const p of peaks) {
        y -= (background(p[0]) - p[1]) * Math.exp(-Math.pow((x - p[0]) / p[2], 2) / 2);
    }
    const noise = (rnd() + rnd() + rnd() - 1.5) * (b > 560 ? 9 : 13.5);
    y += noise;
    // points land on whole pixel columns
    const px = Math.floor(x - 112) + 0.5;
    d2 += px + ' ' + (y - 180).toFixed(1) + ' ';
    d1 += px + ' ' + (64 - (580 - y) * 0.165).toFixed(1) + ' ';
}
document.getElementById('scan1').setAttribute('d', d1);
document.getElementById('scan2').setAttribute('d', d2);
```
